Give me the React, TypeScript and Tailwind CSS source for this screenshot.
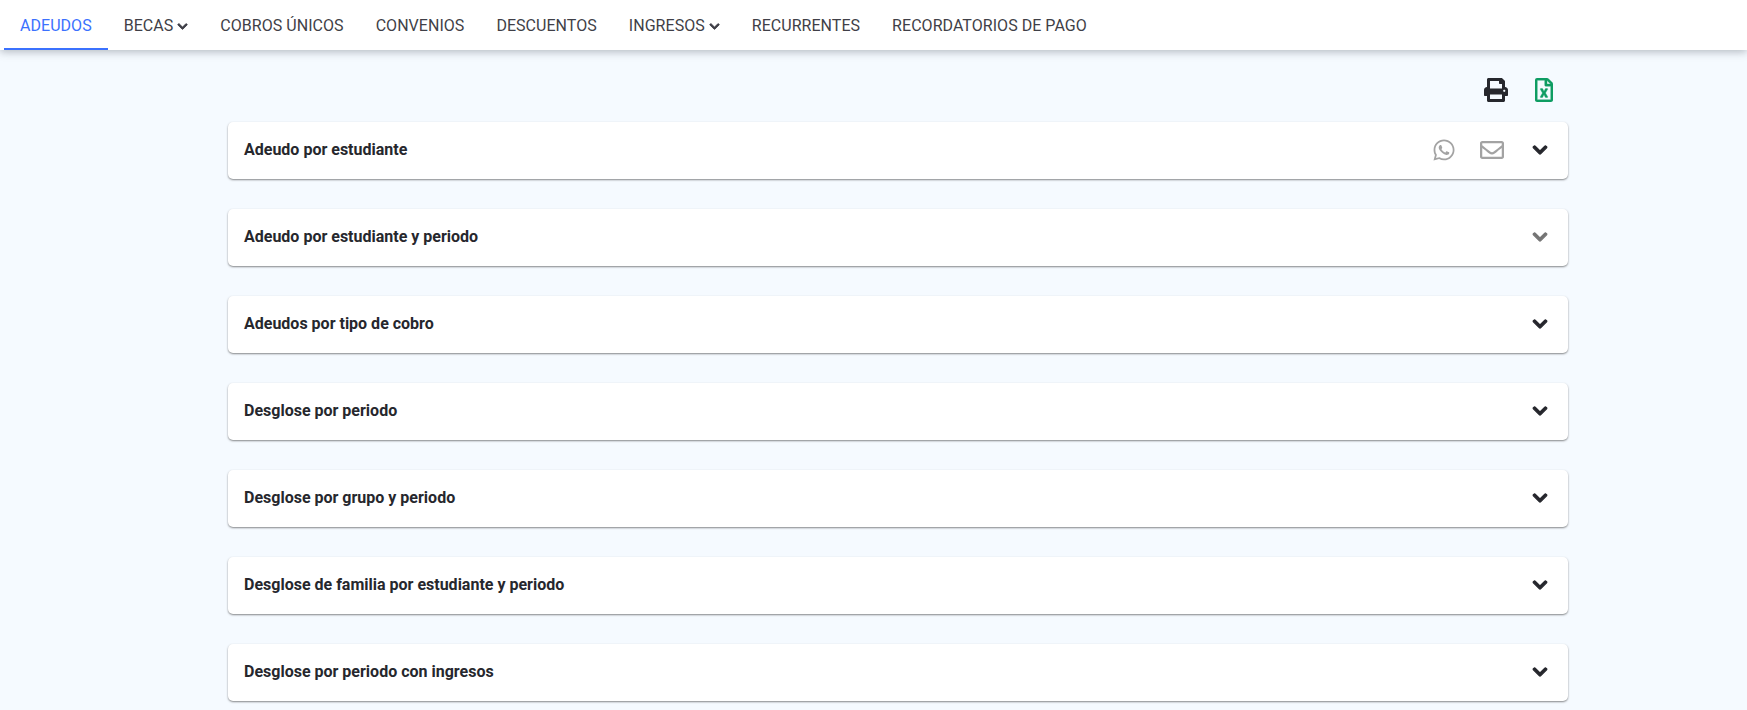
import { FaChevronDown, FaPrint, FaRegEnvelope, FaRegFileExcel, FaWhatsapp } from 'react-icons/fa';

const tabs = [
  { label: 'ADEUDOS', active: true },
  { label: 'BECAS', menu: true },
  { label: 'COBROS ÚNICOS' },
  { label: 'CONVENIOS' },
  { label: 'DESCUENTOS' },
  { label: 'INGRESOS', menu: true },
  { label: 'RECURRENTES' },
  { label: 'RECORDATORIOS DE PAGO' },
];

const reports = [
  'Adeudo por estudiante',
  'Adeudo por estudiante y periodo',
  'Adeudos por tipo de cobro',
  'Desglose por periodo',
  'Desglose por grupo y periodo',
  'Desglose de familia por estudiante y periodo',
  'Desglose por periodo con ingresos',
];

export default function App() {
  return (
    <div className="h-[710px] overflow-hidden bg-[#f5faff] font-['Roboto',sans-serif] text-[#26272d]">
      {/* Tabs */}
      <nav className="flex h-[50px] items-stretch bg-white pl-1 shadow-[0_2px_8px_rgba(60,70,80,0.35)]">
        {tabs.map((tab) => (
          <button
            key={tab.label}
            className={`flex items-center gap-1 border-b-2 px-4 pt-1 text-base font-normal tracking-[0.04px] ${
              tab.active ? 'border-[#3b71fe] text-[#3b71fe]' : 'border-transparent text-[#3f3f47]'
            }`}
          >
            {tab.label}
            {tab.menu && <FaChevronDown className="h-[11px] w-[11px] stroke-[40]" />}
          </button>
        ))}
      </nav>

      <main className="ml-[228px] w-[1340px]">
        {/* Export actions */}
        <div className="flex h-[72px] items-center justify-end gap-[27px] pr-[15px] pt-[7px]">
          <FaPrint className="h-6 w-6 text-[#26272d]" />
          <FaRegFileExcel className="h-6 w-[18px] stroke-[8] text-[#0f9d63]" />
        </div>

        <div className="flex flex-col gap-[30px]">
          {reports.map((report, i) => (
            <div
              key={report}
              className="flex h-[57px] items-center rounded-[5px] bg-white pb-[2px] pl-4 pr-5 shadow-[0_1px_2px_rgba(40,40,40,0.55)]"
            >
              <span className="flex-1 text-base font-bold">{report}</span>
              {i === 0 && (
                <div className="mr-[28px] flex items-center gap-6 text-[#a3a3a3]">
                  <FaWhatsapp className="h-6 w-6" />
                  <FaRegEnvelope className="h-6 w-6" />
                </div>
              )}
              <FaChevronDown className={`h-4 w-4 stroke-[40] ${i === 1 ? 'text-[#757575]' : 'text-[#26272d]'}`} />
            </div>
          ))}
        </div>
      </main>
    </div>
  );
}
